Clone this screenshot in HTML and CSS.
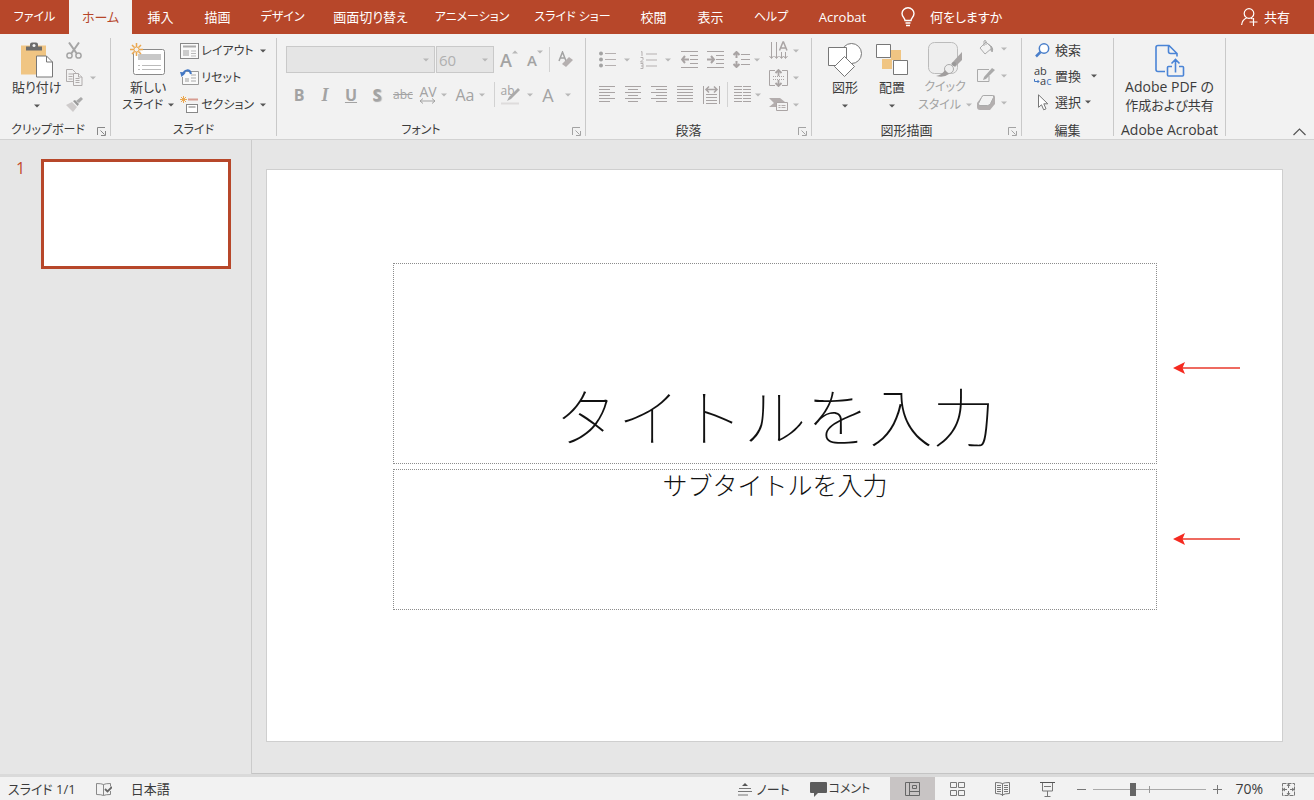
FILE: index.html
```html
<!DOCTYPE html>
<html lang="ja">
<head>
<meta charset="utf-8">
<title>プレゼンテーション</title>
<link rel="stylesheet" href="styles.css">
</head>
<body>
<svg class="defs" aria-hidden="true">
  <symbol id="caret" viewBox="0 0 6 4"><path d="M0 .5h6L3 3.5z" fill="currentColor"/></symbol>
  <symbol id="launcher" viewBox="0 0 9 9"><path d="M.5 8V.5H8M3.500 3.500l4 4M8.500 4v4.500H4" fill="none" stroke="currentColor"/></symbol>
</svg>
<div class="app">
  <nav class="tabs" aria-label="リボン タブ">
    <button class="tab kana">ファイル</button>
    <button class="tab active">ホーム</button>
    <button class="tab">挿入</button>
    <button class="tab">描画</button>
    <button class="tab kana">デザイン</button>
    <button class="tab">画面切り替え</button>
    <button class="tab kana">アニメーション</button>
    <button class="tab kana">スライド ショー</button>
    <button class="tab">校閲</button>
    <button class="tab">表示</button>
    <button class="tab kana">ヘルプ</button>
    <button class="tab">Acrobat</button>
    <button class="tab tell">
      <svg width="14" height="20" viewBox="0 0 14 20" fill="none" stroke="#fff" stroke-width="1.400"><path d="M4 13.500C4 11 1 10 1 6.500a6 5.800 0 0 1 12 0C13 10 10 11 10 13.500zM4.500 16h5M5 18.500h4"/></svg>
      何をしますか</button>
    <button class="tab share">
      <svg width="17" height="18" viewBox="0 0 17 18" fill="none" stroke="#fff" stroke-width="1.200"><circle cx="8" cy="5.500" r="4.800"/><path d="M.6 17c.4-4 2.500-6 5-7M10 10l1.500 1M12.500 10v8M8.500 14h8"/></svg>
      共有</button>
  </nav>

  <div class="ribbon">
    <section class="group clipboard">
      <div class="body">
        <button class="big">
          <svg width="32" height="35" viewBox="0 0 32 35"><path d="M0 3h25v29H0z" fill="#f0c583"/><path d="M5 8V4h4V2q0-2 2-2h4q2 0 2 2v2h4v4z" fill="#6b6b6b"/><circle cx="13" cy="3" r="1.500" fill="#f2f2f2"/><path d="M15.500 13.500h10l6 6v15h-16z" fill="#fff" stroke="#777"/><path d="M25.500 13.500v6h6" fill="none" stroke="#777"/></svg>
          <span>貼り付け</span>
          <svg class="caret"><use href="#caret"/></svg>
        </button>
        <div class="stack icons">
          <button class="off" aria-label="切り取り"><svg width="16" height="17" viewBox="0 0 16 17" fill="none" stroke="#a5a5a5" stroke-width="1.500"><circle cx="3.500" cy="13.500" r="2.600"/><circle cx="12.500" cy="13.500" r="2.600"/><path d="M3 .5l7.500 10.800M13 .5L5.500 11.300" stroke-width="2"/></svg></button>
          <button class="off" aria-label="コピー"><svg width="17" height="17" viewBox="0 0 17 17" fill="#f2f2f2" stroke="#b0acac"><path d="M.5.500h6l3 3v9h-9z"/><path d="M2.500 5h5M2.500 7.500h4M2.500 10h4"/><path d="M7.500 4.500h5l3.500 3.500v8.500H7.500z"/><path d="M12.500 4.500V8H16M9.500 9.500h4M9.500 11.500h4M9.500 13.500h4"/></svg><svg class="caret"><use href="#caret"/></svg></button>
          <button class="off" aria-label="書式のコピー"><svg width="17" height="15" viewBox="0 0 17 15"><path d="M0 8l6-3 5 5-4 5z" fill="#cfcccc"/><path d="M7 4l2-1 4 4-1.500 2z" fill="#999"/><path d="M10 4l5-4 2 2-4 4z" fill="#aaa"/></svg></button>
        </div>
      </div>
      <footer><span class="kana">クリップボード</span><button class="launch" aria-label="クリップボードの設定"><svg width="9" height="9"><use href="#launcher"/></svg></button></footer>
    </section>

    <section class="group slides">
      <div class="body">
        <button class="big">
          <svg width="36" height="34" viewBox="0 0 36 34"><rect x="3.500" y="6.500" width="31" height="25" rx="2" fill="#fff" stroke="#8a8a8a"/><path d="M8 11h23v6H8z" fill="#c8c8c8"/><path d="M8 22.500h2m2 0h19M8 26.500h2m2 0h19" stroke="#bbb"/><circle cx="6.500" cy="6.500" r="5" fill="#f2f2f2"/><path d="M6.500 0v4M6.500 9v4M0 6.500h4M9 6.500h4M2 2l2.500 2.500M8.500 8.500L11 11M11 2L8.500 4.500M2 11l2.500-2.500" stroke="#eba850" stroke-width="1.500"/><circle cx="6.500" cy="6.500" r="2.500" fill="none" stroke="#eba850"/></svg>
          <span>新しい</span>
          <span class="line kana">スライド <svg class="caret"><use href="#caret"/></svg></span>
        </button>
        <div class="stack rows kana">
          <button><svg width="19" height="16" viewBox="0 0 19 16" fill="none" stroke="#888"><rect x=".5" y=".5" width="18" height="15" fill="#fafafa"/><path d="M3 3.500h13" stroke-width="2" stroke="#aaa"/><path d="M3 7h6v6H3z" fill="#ccc" stroke="none"/><path d="M11 8h5M11 10.500h5M11 13h5" stroke="#bbb"/></svg><span>レイアウト</span><svg class="caret"><use href="#caret"/></svg></button>
          <button><svg width="19" height="17" viewBox="0 0 19 17" fill="none"><path d="M5 2.500h13.500v13H2.500V8" fill="#fafafa" stroke="#999"/><path d="M5 9h4v4H5z" fill="#ccc"/><path d="M11 6h5M11 9h5M11 12h5" stroke="#aaa"/><path d="M3 6C4 0 10 0 11 5" stroke="#4378c4" stroke-width="2"/><path d="M0 3l6 .5L1.500 8z" fill="#4378c4"/></svg><span>リセット</span></button>
          <button><svg width="19" height="17" viewBox="0 0 19 17" fill="none"><path d="M8 3.500h10" stroke="#d79c91" stroke-width="2"/><rect x="6.500" y="8.500" width="11" height="8" fill="#fff" stroke="#888"/><path d="M8.500 11h7" stroke="#bbb" stroke-width="2"/><path d="M3.500 0v7M0 3.500h7M1 1l5 5M6 1L1 6" stroke="#eba850"/></svg><span>セクション</span><svg class="caret"><use href="#caret"/></svg></button>
        </div>
      </div>
      <footer><span class="kana">スライド</span></footer>
    </section>

    <section class="group font">
      <div class="body two">
        <div class="bar">
          <div class="combo name"><select aria-label="フォント名" disabled><option></option></select><svg class="caret"><use href="#caret"/></svg></div>
          <div class="combo size"><select aria-label="フォント サイズ" disabled><option>60</option></select><svg class="caret"><use href="#caret"/></svg></div>
          <button class="off grow" aria-label="拡大">A<svg class="caret up"><use href="#caret"/></svg></button>
          <button class="off shrink" aria-label="縮小">A<svg class="caret"><use href="#caret"/></svg></button>
          <i class="rule"></i>
          <button class="off" aria-label="書式のクリア"><svg width="15" height="18" viewBox="0 0 15 18" fill="none" stroke="#a3a3a3" stroke-width="1.500"><path d="M1 10l3.500-9L8 10M2 7h5"/><path d="M4 13l7-7 4 3-7 7z" fill="#b5b0b0" stroke="none"/></svg></button>
        </div>
        <div class="bar letters">
          <button class="off"><b>B</b></button>
          <button class="off serif"><em>I</em></button>
          <button class="off"><b><u>U</u></b></button>
          <button class="off shadow"><b>S</b></button>
          <button class="off small"><s>abc</s></button>
          <button class="off spacing"><span>AV<svg width="17" height="6" viewBox="0 0 17 6" fill="none" stroke="currentColor"><path d="M1 3h15M4 .5L1 3l3 2.500M13 .5L16 3l-3 2.500"/></svg></span><svg class="caret"><use href="#caret"/></svg></button>
          <button class="off case">Aa<svg class="caret"><use href="#caret"/></svg></button>
          <i class="rule"></i>
          <button class="off marker"><span>ab<svg width="19" height="18" viewBox="0 0 19 18"><path d="M17 1l2 2-9 9-4 2 2-4z" fill="#aaa"/><path d="M0 15.500h18v2H0z" fill="#dedcdc"/></svg></span><svg class="caret"><use href="#caret"/></svg></button>
          <button class="off color">A<svg class="caret"><use href="#caret"/></svg></button>
        </div>
      </div>
      <footer><span class="kana">フォント</span><button class="launch off" aria-label="フォントの設定"><svg width="9" height="9"><use href="#launcher"/></svg></button></footer>
    </section>

    <section class="group para">
      <div class="body">
        <div class="two">
          <div class="bar">
            <button class="off wide" aria-label="箇条書き"><svg width="17" height="17" viewBox="0 0 17 17"><path d="M6 2.500h11M6 8.500h11M6 14.500h11" stroke="#b5b0b0"/><g fill="#a3a3a3"><circle cx="2" cy="2.500" r="2"/><circle cx="2" cy="8.500" r="2"/><circle cx="2" cy="14.500" r="2"/></g></svg><svg class="caret"><use href="#caret"/></svg></button>
            <button class="off wide" aria-label="段落番号"><svg width="17" height="18" viewBox="0 0 17 18" fill="none" stroke="#b5b0b0"><path d="M6 3h11M6 9h11M6 15h11"/><path d="M1 1l1-.5V5M.5 6.500H3v2L.5 11H3.500M.5 12.500H3v5H.5M1 15h2"/></svg><svg class="caret"><use href="#caret"/></svg></button>
            <button class="off icon" aria-label="インデントを減らす"><svg width="17" height="17" viewBox="0 0 17 17" fill="none" stroke="#a9a4a4"><path d="M0 .5h17M9 4.500h8M9 8.500h8M9 12.500h8M0 16.500h17"/><path d="M8 8.500H1M4 5L1 8.500 4 12" stroke-width="2"/></svg></button>
            <button class="off icon" aria-label="インデントを増やす"><svg width="17" height="17" viewBox="0 0 17 17" fill="none" stroke="#a9a4a4"><path d="M0 .5h17M9 4.500h8M9 8.500h8M9 12.500h8M0 16.500h17"/><path d="M0 8.500h7M4 5l3 3.500L4 12" stroke-width="2"/></svg></button>
            <button class="off line-gap" aria-label="行間"><svg width="17" height="17" viewBox="0 0 17 17" fill="none" stroke="#a9a4a4"><path d="M8 3.500h9M8 8.500h9M8 13.500h9"/><path d="M3.500 1v6M.5 4l3-3 3 3M3.500 10v6M.5 13l3 3 3-3" stroke-width="2"/></svg><svg class="caret"><use href="#caret"/></svg></button>
          </div>
          <div class="bar">
            <button class="off icon" aria-label="左揃え"><svg width="16" height="17" viewBox="0 0 16 17" stroke="#a9a4a4"><path d="M0 .5h16M0 3.500h11M0 6.500h16M0 9.500h11M0 12.500h16M0 15.500h11"/></svg></button>
            <button class="off icon" aria-label="中央揃え"><svg width="16" height="17" viewBox="0 0 16 17" stroke="#a9a4a4"><path d="M0 .5h16M3 3.500h10M0 6.500h16M3 9.500h10M0 12.500h16M3 15.500h10"/></svg></button>
            <button class="off icon" aria-label="右揃え"><svg width="16" height="17" viewBox="0 0 16 17" stroke="#a9a4a4"><path d="M0 .5h16M5 3.500h11M0 6.500h16M5 9.500h11M0 12.500h16M5 15.500h11"/></svg></button>
            <button class="off icon" aria-label="両端揃え"><svg width="16" height="17" viewBox="0 0 16 17" stroke="#a9a4a4"><path d="M0 .5h16M0 3.500h16M0 6.500h16M0 9.500h16M0 12.500h16M0 15.500h16"/></svg></button>
            <button class="off icon" aria-label="均等割り付け"><svg width="17" height="18" viewBox="0 0 17 18" fill="none" stroke="#a9a4a4"><path d="M.5 0v18M16.500 0v18M3 8.500h11M3 11.500h11M3 14.500h11M3 17.500h11"/><path d="M3 3.500h11M6 .5l-3 3 3 3M11 .5l3 3-3 3" stroke-width="1.500"/></svg></button>
            <i class="rule"></i>
            <button class="off line-gap" aria-label="段組み"><svg width="17" height="17" viewBox="0 0 17 17" stroke="#a9a4a4"><path d="M0 .5h8m1 0h8M0 3.500h8m1 0h8M0 6.500h8m1 0h8M0 9.500h8m1 0h8M0 12.500h8m1 0h8M0 15.500h8m1 0h8"/></svg><svg class="caret"><use href="#caret"/></svg></button>
          </div>
        </div>
        <div class="stack rows">
          <button class="off" aria-label="文字列の方向"><svg width="19" height="19" viewBox="0 0 19 19" fill="none" stroke="#a9a4a4"><path d="M2.500 1v16M7.500 1v16M12.500 11v6M16.500 11v6M.5 15l2 2.500 2-2.500M5.500 15l2 2.500 2-2.500M10.500 15l2 2.500 2-2.500M14.500 15l2 2.500 2-2.500"/><path d="M10.500 9.500L14 1h.5L18 9.500M11.500 7h5.500" stroke-width="1.500"/></svg><svg class="caret"><use href="#caret"/></svg></button>
          <button class="off" aria-label="文字の配置"><svg width="19" height="18" viewBox="0 0 19 18" fill="none" stroke="#a9a4a4"><path d="M6 1.500H.5v15H6M13 1.500h5.500v15H13"/><path d="M4 7.500h11M4 10.500h11" stroke-dasharray="1 1"/><path d="M9.500 1v6M6.500 4l3-3 3 3M9.500 11v6M6.500 14l3 3 3-3" stroke-width="1.800"/></svg><svg class="caret"><use href="#caret"/></svg></button>
          <button class="off" aria-label="SmartArt に変換"><svg width="19" height="15" viewBox="0 0 19 15"><path d="M0 1h11l5 4-3 5H0l5-4z" fill="#b3adad"/><path d="M7.500 5.500h11v8h-11z" fill="#f2f2f2" stroke="#aaa4a4"/><path d="M9.500 8.500h2m1 0h4M9.500 10.500h2m1 0h4" stroke="#b3adad"/></svg><svg class="caret"><use href="#caret"/></svg></button>
        </div>
      </div>
      <footer><span>段落</span><button class="launch off" aria-label="段落の設定"><svg width="9" height="9"><use href="#launcher"/></svg></button></footer>
    </section>

    <section class="group drawing">
      <div class="body">
        <button class="big">
          <svg width="34" height="34" viewBox="0 0 34 34" fill="#fff" stroke="#777"><circle cx="23.500" cy="10.500" r="10"/><path d="M.5 4.500h18v18H.5z"/><path d="M16.500 13.500l10 10-10 10-10-10z"/></svg>
          <span>図形</span>
          <svg class="caret"><use href="#caret"/></svg>
        </button>
        <button class="big">
          <svg width="32" height="34" viewBox="0 0 32 34" fill="#fff" stroke="#777"><path d="M15 7h10v10H15zM6 16h10v10H6z" fill="#f0c583" stroke="none"/><path d="M.5 1.500h14v13H.5zM17.500 17.500h14v14h-14z"/></svg>
          <span>配置</span>
          <svg class="caret"><use href="#caret"/></svg>
        </button>
        <button class="big off quick">
          <svg width="34" height="36" viewBox="0 0 34 36"><rect x=".5" y=".5" width="29" height="31" rx="6" fill="#eee" stroke="#bbb"/><path d="M34 10v8l-7 7-4-3z" fill="#a8a5a5"/><circle cx="21" cy="27" r="4.500" fill="#eee" stroke="#aaa"/><circle cx="26" cy="22" r="2" fill="#999"/><path d="M8 34q6-1 9-6l4 4q-5 4-13 2z" fill="#a19e9e"/></svg>
          <span class="kana">クイック</span>
          <span class="line kana">スタイル <svg class="caret"><use href="#caret"/></svg></span>
        </button>
        <div class="stack rows">
          <button class="off" aria-label="図形の塗りつぶし"><svg width="18" height="17" viewBox="0 0 18 17" fill="none" stroke="#aaa"><path d="M3 8l6-6 6 6-7 6z"/><path d="M7 6V1q1-1 2 0v4M11 4q4 1 3 7"/><path d="M14 6q3 3 1 6z" fill="#999"/></svg><svg class="caret"><use href="#caret"/></svg></button>
          <button class="off" aria-label="図形の枠線"><svg width="18" height="15" viewBox="0 0 18 15" fill="none" stroke="#aaa"><path d="M12 1.500H.5v12H12V8"/><path d="M15 0l3 2-9 9-3 1 1-3z" fill="#aaa" stroke="none"/></svg><svg class="caret"><use href="#caret"/></svg></button>
          <button class="off" aria-label="図形の効果"><svg width="18" height="17" viewBox="0 0 18 17"><path d="M6 1h10q2 0 2 2v7l-5 6H3q-3 0-3-3V9z" fill="#b3afaf"/><path d="M6.500 1.500h9q1.500 0 1 2l-3 6q-1 2-3 2H3q-2 0-1.500-2l3-6q1-2 2-2z" fill="#f2f2f2" stroke="#aaa"/></svg><svg class="caret"><use href="#caret"/></svg></button>
        </div>
      </div>
      <footer><span>図形描画</span><button class="launch off" aria-label="図形の書式設定"><svg width="9" height="9"><use href="#launcher"/></svg></button></footer>
    </section>

    <section class="group editing">
      <div class="body">
        <div class="stack rows">
          <button><svg width="17" height="15" viewBox="0 0 17 15" fill="none" stroke="#4a7fca"><circle cx="10" cy="5.500" r="4.700" fill="#fff" stroke-width="1.500"/><path d="M6.500 9L2 13.500" stroke-width="2.500"/></svg><span>検索</span></button>
          <button><span class="swap"><span>ab</span><span class="to"><svg width="6" height="5" viewBox="0 0 6 5" fill="none" stroke="#4378c4"><path d="M.5 0v2.500H5M3.500 1L5 2.500 3.500 4"/></svg>a<b>c</b></span></span><span>置換</span><svg class="caret far"><use href="#caret"/></svg></button>
          <button><svg width="17" height="17" viewBox="0 0 17 17" fill="#fff" stroke="#777"><path d="M4.500.800v12.500l3-2.500 2.200 5 2.300-1-2.200-5h4z"/></svg><span>選択</span><svg class="caret"><use href="#caret"/></svg></button>
        </div>
      </div>
      <footer><span>編集</span></footer>
    </section>

    <section class="group adobe">
      <div class="body">
        <button class="big">
          <svg width="30" height="33" viewBox="0 0 30 33" fill="none" stroke="#4a84d6" stroke-width="1.600"><path d="M10 27H3q-2 0-2-2V3q0-2 2-2h11l8 8v3M13.500 1v6q0 2 2 2H22"/><path d="M17 22h-3.500q-1 0-1 1v7.500q0 1 1 1h14q1 0 1-1V23q0-1-1-1H24M20.500 28V15.500M16.500 19l4-4 4 4"/></svg>
          <span class="latin">Adobe PDF の</span>
          <span>作成および共有</span>
        </button>
      </div>
      <footer><span class="latin">Adobe Acrobat</span></footer>
    </section>
    <button class="collapse" aria-label="リボンを折りたたむ"><svg width="13" height="8" viewBox="0 0 13 8" fill="none" stroke="#555" stroke-width="1.200"><path d="M.5 7l6-6 6 6"/></svg></button>
  </div>

  <div class="work">
    <aside class="thumbs">
      <span>1</span>
      <button class="thumb" aria-label="スライド 1"></button>
    </aside>
    <main class="stage">
      <article class="slide">
        <div class="holder title">
          <h1>タイトルを入力</h1>
          <svg class="arrow" width="67" height="12" viewBox="0 0 67 12"><path d="M9 6h58" stroke="#e8392b" stroke-width="1.600"/><path d="M0 6l12-6-2.500 6 2.500 6z" fill="#f52a20"/></svg>
        </div>
        <div class="holder subtitle">
          <p>サブタイトルを入力</p>
          <svg class="arrow" width="67" height="12" viewBox="0 0 67 12"><path d="M9 6h58" stroke="#e8392b" stroke-width="1.600"/><path d="M0 6l12-6-2.500 6 2.500 6z" fill="#f52a20"/></svg>
        </div>
      </article>
    </main>
  </div>

  <footer class="status">
    <span>スライド 1/1</span>
    <button aria-label="スペル チェック"><svg width="16" height="15" viewBox="0 0 16 15" fill="none" stroke="#888"><path d="M7.500 2.500q-2-1-7-1v11q5 0 7 1 2-1 7-1V9M7.500 2.500v11M7.500 2.500q2-1 7-1v3"/><path d="M9 7l2.500 2.500L16 5" stroke="#666" stroke-width="1.800"/></svg></button>
    <button>日本語</button>
    <span class="space"></span>
    <button class="note"><svg width="14" height="13" viewBox="0 0 14 13"><path d="M7 0l3 3H4z" fill="#555"/><path d="M1 5.500h12M0 8.500h14M0 12h10" stroke="#777"/></svg>ノート</button>
    <button class="comment kana"><svg width="17" height="15" viewBox="0 0 17 15"><path d="M1 0h15q1 0 1 1v9q0 1-1 1H8l-4 4v-4H1q-1 0-1-1V1q0-1 1-1z" fill="#5c5c5c"/></svg>コメント</button>
    <div class="views">
      <button class="on" aria-label="標準"><svg width="15" height="14" viewBox="0 0 15 14" fill="none" stroke="#666"><path d="M.5.500h14v13H.5zM4.500.500v13M4.500 9.500h10M7.500 3.500h4v3h-4z"/></svg></button>
      <button aria-label="スライド一覧"><svg width="15" height="14" viewBox="0 0 15 14" fill="none" stroke="#777"><path d="M.5.500h6v5h-6zM8.500.500h6v5h-6zM.5 8.500h6v5h-6zM8.500 8.500h6v5h-6z"/></svg></button>
      <button aria-label="閲覧表示"><svg width="15" height="14" viewBox="0 0 15 14" fill="none" stroke="#777"><path d="M7.500 1.500q-2-1-7-1v11q5 0 7 1.500 2-1.500 7-1.500v-11q-5 0-7 1zM7.500 1.500V14M2 3.500h4M2 5.500h4M2 7.500h4M2 9.500h4M9 3.500h4M9 5.500h4M9 7.500h4M9 9.500h4"/></svg></button>
      <button aria-label="スライド ショー"><svg width="15" height="15" viewBox="0 0 15 15" fill="none" stroke="#777"><path d="M0 .5h15" stroke="#555"/><path d="M2.500 1v8h10V1M4 4.500h7M7.500 9v5M4.500 14.500h6"/></svg></button>
    </div>
    <button class="step" aria-label="縮小"><svg width="9" height="9" viewBox="0 0 9 9" stroke="#777"><path d="M0 4.500h9"/></svg></button>
    <input class="zoom" type="range" min="0" max="100" value="34" aria-label="ズーム">
    <button class="step" aria-label="拡大"><svg width="9" height="9" viewBox="0 0 9 9" stroke="#777"><path d="M0 4.500h9M4.500 0v9"/></svg></button>
    <button class="percent latin">70%</button>
    <button aria-label="ウィンドウに合わせる"><svg width="13" height="13" viewBox="0 0 13 13" fill="none" stroke="#777"><path d="M.5.500h12v12H.5z" stroke-dasharray="4 1"/><path d="M6.500 1v4M6.500 8v4M1 6.500h4M8 6.500h4M5 3l1.500-2L8 3M5 10l1.500 2L8 10M3 5L1 6.500 3 8M10 5l2 1.500L10 8"/></svg></button>
  </footer>
</div>
</body>
</html>
```
FILE: styles.css
```css
* { box-sizing: border-box; }
body {
  margin: 0;
  color: #3c3c3c;
  background: #e6e6e6;
  font: 13px/18px "Open Sans", "Noto Sans CJK JP", sans-serif;
  font-feature-settings: "palt";
}
button, select {
  font: inherit;
  font-feature-settings: inherit;
  color: inherit;
  background: none;
  border: 0;
  padding: 0;
  margin: 0;
  white-space: nowrap;
}
svg { flex: none; display: block; }
.defs { position: absolute; width: 0; height: 0; }
.app { min-height: 100vh; display: grid; grid-template-rows: 34px 106px 1fr 24px; }
.kana { font-size: 12px; }
.latin { font-size: 14px; }

.tabs {
  display: grid;
  grid-template-columns: 69px 63px 57px 57px 73px 103px 100px 101px 61px 53px 68px 75px auto 1fr;
  background: #b7472a;
}
.tab { color: #fff; }
.tab.active { background: #f2f2f2; color: #b7472a; }
.tell, .share { display: flex; align-items: center; }
.tell { gap: 15px; padding-left: 21px; }
.share { gap: 6px; justify-self: end; padding-right: 24px; }

.ribbon {
  display: grid;
  grid-template-columns: 111px 166px 309px 226px 210px 92px 112px 1fr;
  background: #f2f2f2;
  border-bottom: 1px solid #d2d2d2;
  padding: 4px 0 3px;
}
.group { display: flex; flex-direction: column; border-right: 1px solid #c9c9c9; }
.body { flex: 1; display: flex; align-items: flex-start; padding-top: 4px; }
.group footer { height: 14px; line-height: 16px; display: flex; justify-content: center; position: relative; }
.launch { position: absolute; right: 4px; bottom: 0; color: #888; }
.caret { width: 6px; height: 4px; color: #555; }
.off { color: #a3a3a3; }
.off .caret { color: #b8b8b8; }
.big { display: flex; flex-direction: column; align-items: center; }
.big > svg:first-child { height: 36px; }
.big .caret { margin-top: 8px; }
.line { display: flex; align-items: center; gap: 5px; }
.big .line .caret { margin: 0; }
.big > span { line-height: 18px; }
.stack { display: grid; grid-template-rows: repeat(3, 27px); margin-top: -5px; }
.stack button { display: flex; align-items: center; }
.rows button { gap: 2px; }
.rows .caret { margin-left: 4px; }
.rule { width: 1px; height: 25px; background: #d2d2d2; }
.bar { display: flex; align-items: center; height: 27px; }
.bar button { display: flex; align-items: center; justify-content: center; height: 24px; }
.two { display: flex; flex-direction: column; gap: 8px; align-items: flex-start; }

.clipboard .body { padding-left: 12px; gap: 4px; }
.clipboard footer { justify-content: flex-start; padding-left: 11px; }
.icons .caret { margin-left: 7px; }
.slides .body { padding-left: 11px; gap: 6px; }

.font .body { padding: 8px 0 0 9px; }
.font footer { padding-right: 20px; }
.combo { position: relative; height: 27px; margin-right: 1px; }
.combo select { appearance: none; width: 100%; height: 100%; padding: 0 2px; font-size: 15px; border: 1px solid #c9c9c9; background: #e5e5e5; color: #b0b0b0; opacity: 1; }
.combo .caret { position: absolute; right: 6px; top: 12px; color: #b8b8b8; }
.name { width: 149px; }
.size { width: 58px; margin-right: 2px; }
.grow, .shrink { width: 26px; font-size: 18px; font-weight: 600; }
.shrink { font-size: 15px; }
.grow .caret, .shrink .caret { align-self: flex-start; margin-top: 2px; }
.up { transform: rotate(180deg); }
.font .bar:first-child .rule { margin: 0 8px 0 1px; }
.letters button { width: 26px; font-size: 16px; }
.letters .serif { font-family: "Liberation Serif", serif; font-size: 18px; font-weight: 700; }
.letters .shadow { text-shadow: 1px 1px 1px #aaa; }
.letters .small { font-size: 12px; }
.letters .spacing { width: 34px; font-size: 14px; gap: 4px; }
.spacing span { line-height: 12px; }
.letters .case { width: 40px; gap: 4px; }
.letters .rule { margin: 0 5px 0 4px; }
.letters .marker { width: 33px; gap: 7px; font-size: 12px; }
.marker span { position: relative; width: 19px; height: 20px; line-height: 12px; text-align: left; }
.marker span svg { position: absolute; left: 0; top: 2px; }
.letters .color { width: 47px; gap: 11px; font-size: 18px; }

.para .body { padding-left: 13px; }
.para .two { width: 170px; padding-top: 4px; }
.para .two .bar button { justify-content: flex-start; }
.para .wide { width: 41px; gap: 8px; }
.para .icon { width: 26px; }
.para .line-gap { gap: 4px; }
.para .rule { margin-right: 6px; margin-left: -2px; }
.para .rows .caret { margin-left: 3px; }
.para footer { padding-right: 20px; }

.drawing .body { padding-left: 16px; gap: 14px; }
.drawing .body > .quick { margin-left: -4px; }
.drawing .stack { margin-left: -9px; margin-top: -7px; }
.drawing footer { padding-right: 20px; }
.editing .body { padding-left: 12px; }
.editing .stack { grid-template-rows: repeat(3, 26px); }
.editing .rows button { gap: 4px; }
.editing .rows .caret { margin-left: 0; }
.editing .rows .far { margin-left: 6px; }
.swap { display: grid; grid-template-rows: 10px 11px; width: 17px; line-height: 10px; font-size: 11px; text-align: left; }
.swap .to { display: flex; align-items: center; }
.swap b { color: #4378c4; font-weight: 400; }
.adobe .body { justify-content: center; padding-top: 6px; }
.adobe .big > svg:first-child { height: 34px; }
.collapse { justify-self: end; align-self: end; padding: 0 8px 0 0; }

.work { display: grid; grid-template-columns: 252px 1fr; border-bottom: 3px solid #dadada; }
.thumbs { display: flex; align-items: flex-start; gap: 16px; padding: 19px 20px 0 16px; border-right: 1px solid #cbcbcb; color: #c34a2e; font-size: 16px; }
.thumb { flex: 1; aspect-ratio: 190 / 110; border: 3px solid #b7472a; background: #fff; }
.stage { padding: 29px 31px 31px 14px; border-bottom: 1px solid #c4c4c4; }
.slide {
  aspect-ratio: 1017 / 573;
  background: #fff;
  border: 1px solid #cfcfcf;
  display: grid;
  grid-template-columns: 126fr 764fr 125fr;
  grid-template-rows: 93fr 201fr 5fr 141fr 131fr;
}
.holder { grid-column: 2; position: relative; border: 1px dotted #8c8c8c; color: #111; text-align: center; font-family: "Noto Sans CJK JP", sans-serif; font-feature-settings: normal; }
.title { grid-row: 2; display: flex; align-items: flex-end; justify-content: center; padding-bottom: 9px; }
.subtitle { grid-row: 4; }
h1 { margin: 0; font-size: 63px; line-height: 80px; font-weight: 100; }
.subtitle p { margin: 0; font-size: 25px; line-height: 28px; font-weight: 300; }
.arrow { position: absolute; left: calc(100% + 17px); top: 49%; }
.subtitle .arrow { top: 45%; }

.status { display: flex; align-items: center; padding: 0 19px 0 8px; background: #f2f2f2; }
.status button { display: flex; align-items: center; gap: 5px; height: 24px; }
.status > span:first-child { margin-right: 20px; }
.status > button:nth-child(2) { margin-right: 19px; }
.space { flex: 1; }
.note { margin-right: 20px; }
.status .comment { gap: 2px; }
.views { display: grid; grid-template-columns: repeat(4, 45px); margin-left: 20px; }
.views button { justify-content: center; }
.views .on { background: #c8c4c4; }
.status .step { margin-left: 7px; }
.zoom { appearance: none; width: 113px; height: 14px; margin: 0 0 0 7px; background: linear-gradient(#999, #999) 56px 4px / 1px 7px no-repeat, linear-gradient(#aaa, #aaa) 0 7px / 100% 1px no-repeat; }
.zoom::-webkit-slider-thumb { appearance: none; width: 6px; height: 13px; background: #666; }
.percent { margin: 0 19px 0 13px; }
```
